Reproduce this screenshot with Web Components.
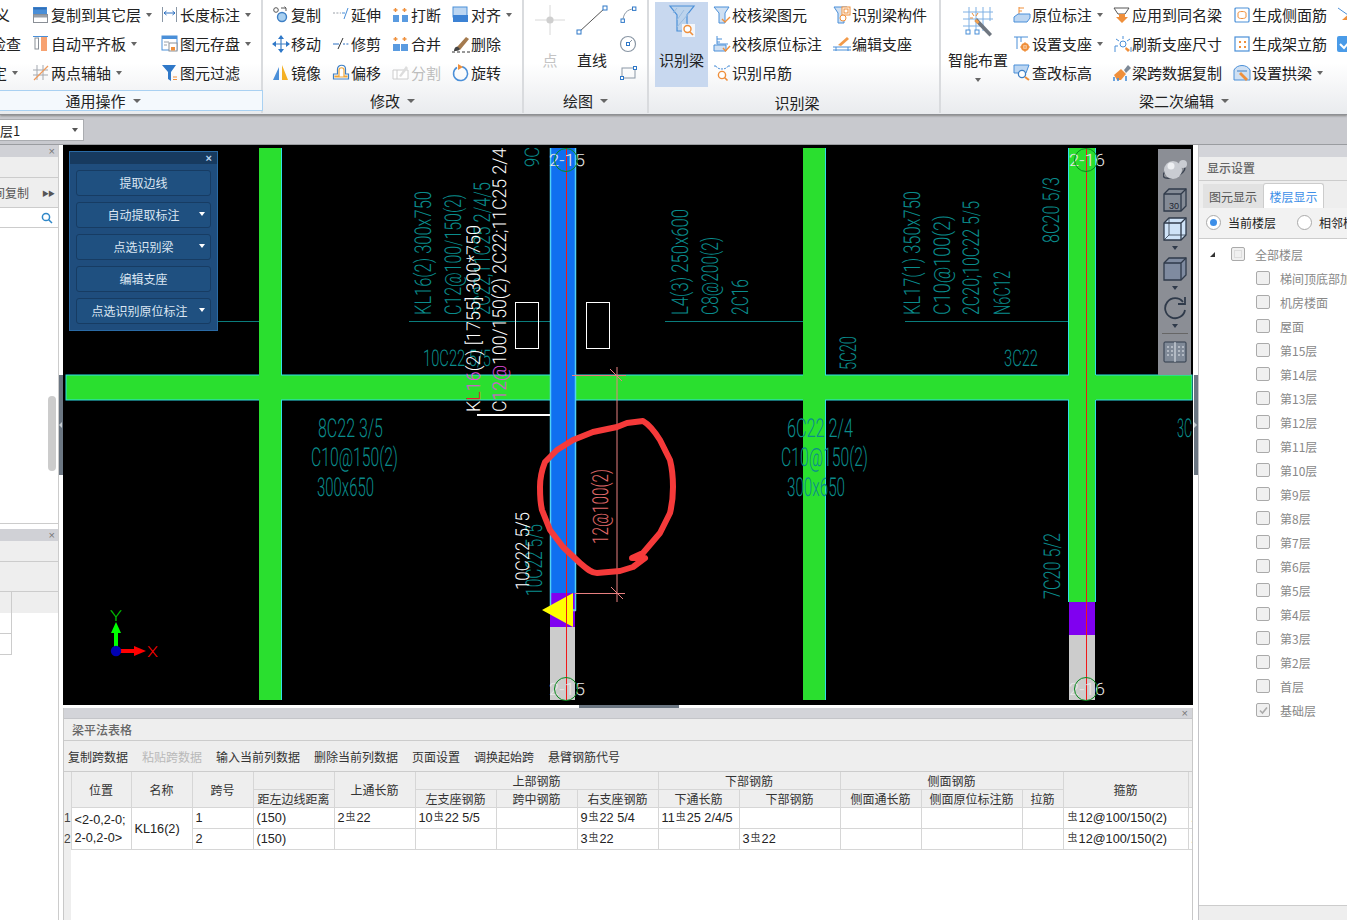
<!DOCTYPE html>
<html lang="zh">
<head>
<meta charset="utf-8">
<title>梁平法表格</title>
<style>
  html, body { margin: 0; height: 100%; background: #fff; overflow: hidden; }
  body { font: 12px "Noto Sans CJK SC", "Liberation Sans", sans-serif; }
  app-shell { width: 1347px; height: 920px; }
</style>
</head>
<body>
<app-shell>
  <app-ribbon slot="ribbon">
    <rb-group label="通用操作" caret hot cols="89px 129px 102px" width="320" style="margin-left:-57px">
      <rb-item label="定义" style="justify-self:end;margin-right:22px"></rb-item>
      <rb-item label="检查" style="justify-self:end;margin-right:11px"></rb-item>
      <rb-item label="设定" caret style="justify-self:end;margin-right:14px"></rb-item>
      <rb-item icon="copylayer" label="复制到其它层" caret></rb-item>
      <rb-item icon="autoalign" label="自动平齐板" caret></rb-item>
      <rb-item icon="twopoint" label="两点辅轴" caret></rb-item>
      <rb-item icon="lendim" label="长度标注" caret></rb-item>
      <rb-item icon="save" label="图元存盘" caret></rb-item>
      <rb-item icon="filter" label="图元过滤"></rb-item>
    </rb-group>
    <rb-group label="修改" caret cols="60px 60px 60px 60px" width="261" pad="9">
      <rb-item icon="copy" label="复制"></rb-item>
      <rb-item icon="move" label="移动"></rb-item>
      <rb-item icon="mirror" label="镜像"></rb-item>
      <rb-item icon="extend" label="延伸"></rb-item>
      <rb-item icon="trim" label="修剪"></rb-item>
      <rb-item icon="offset" label="偏移"></rb-item>
      <rb-item icon="break" label="打断"></rb-item>
      <rb-item icon="merge" label="合并"></rb-item>
      <rb-item icon="split" label="分割" disabled></rb-item>
      <rb-item icon="alignb" label="对齐" caret></rb-item>
      <rb-item icon="erase" label="删除"></rb-item>
      <rb-item icon="rotate" label="旋转"></rb-item>
    </rb-group>
    <rb-group label="绘图" caret cols="40px 44px 5px 24px" width="125" pad="6">
      <rb-large icon="point" w="30" h="30" label="点" disabled></rb-large>
      <rb-large icon="line" w="32" h="30" label="直线"></rb-large>
      <span style="grid-row:1 / span 3"></span>
      <rb-item icon="arc"></rb-item>
      <rb-item icon="circle"></rb-item>
      <rb-item icon="rect"></rb-item>
    </rb-group>
    <rb-group label="识别梁" cols="58px 120px 100px" width="292" pad="6" low>
      <rb-large icon="beam" w="26" h="32" label="识别梁" active></rb-large>
      <rb-item icon="checkbeam" label="校核梁图元"></rb-item>
      <rb-item icon="checkmark" label="校核原位标注"></rb-item>
      <rb-item icon="hanger" label="识别吊筋"></rb-item>
      <rb-item icon="beamparts" label="识别梁构件"></rb-item>
      <rb-item icon="editsupport" label="编辑支座"></rb-item>
    </rb-group>
    <rb-group label="梁二次编辑" caret cols="65px 100px 120px 103px 30px" width="486" pad="7" last>
      <rb-large icon="smart" w="32" h="32" label="智能布置" caret style="width:60px"></rb-large>
      <rb-item icon="inplace" label="原位标注" caret></rb-item>
      <rb-item icon="setsupport" label="设置支座" caret></rb-item>
      <rb-item icon="elevation" label="查改标高"></rb-item>
      <rb-item icon="applysame" label="应用到同名梁"></rb-item>
      <rb-item icon="refresh" label="刷新支座尺寸"></rb-item>
      <rb-item icon="brush" label="梁跨数据复制"></rb-item>
      <rb-item icon="siderebar" label="生成侧面筋"></rb-item>
      <rb-item icon="stand" label="生成架立筋"></rb-item>
      <rb-item icon="arch" label="设置拱梁" caret></rb-item>
      <rb-item icon="corner"></rb-item>
      <rb-item icon="tick"></rb-item>
    </rb-group>
  </app-ribbon>
  <floor-bar slot="floor">层1</floor-bar>
  <side-panel slot="left"></side-panel>
  <cad-canvas slot="canvas">
    <float-panel>
      <float-button>提取边线</float-button>
      <float-button caret>自动提取标注</float-button>
      <float-button caret>点选识别梁</float-button>
      <float-button>编辑支座</float-button>
      <float-button caret style="padding-right:8px">点选识别原位标注</float-button>
    </float-panel>
    <view-tools></view-tools>
  </cad-canvas>
  <plan-table slot="table"></plan-table>
  <display-settings slot="right"></display-settings>
</app-shell>

<script>
const CJK = '"Noto Sans CJK SC", "Liberation Sans", sans-serif';

// 小图标，默认 18x18
const ICONS = {
  copylayer: '<rect x="1" y="1" width="14" height="7" fill="#4a8fd8"/><rect x="1.5" y="1.5" width="13" height="2" fill="#2f6fb8"/><rect x="1.5" y="8.5" width="14" height="8" fill="#fff" stroke="#8a8f96"/><rect x="2" y="9" width="13" height="2.5" fill="#9aa0a8"/>',
  autoalign: '<path d="M1 1.5h15" stroke="#4a8fd8"/><rect x="3" y="3" width="3.5" height="11" fill="#fff" stroke="#8a8f96"/><rect x="9" y="2" width="6" height="14" fill="#f7a271"/>',
  twopoint: '<path d="M5 1v15M11 1v15M1 6h15M1 11h15" stroke="#a4a9b0"/><path d="M2 16 16 2" stroke="#ef9a5b" stroke-width="1.2"/>',
  lendim: '<path d="M1.5 1v15M15.5 1v15" stroke="#8a97a5"/><path d="M3 7h11M3 7l2.5-2M3 7l2.5 2M14 7l-2.5-2M14 7l-2.5 2" stroke="#2a6fc0" fill="none"/>',
  save: '<rect x="1" y="1" width="15" height="14" fill="#fff" stroke="#4a8fd8"/><rect x="1" y="1" width="15" height="3" fill="#4a8fd8"/><path d="M3 7h5M3 10h3" stroke="#9aa0a8"/><rect x="8" y="8" width="8" height="8" fill="#fff" stroke="#8a8f96"/><rect x="10" y="12" width="4" height="3.5" fill="#ef8f3b"/>',
  filter: '<path d="M1 1h14L10 8v9L7 15V8z" fill="#2f78c8"/><path d="M12 13h4M12 15.5h4" stroke="#ef8f3b"/>',
  copy: '<circle cx="4" cy="4" r="2.3" fill="#fff" stroke="#555"/><circle cx="10" cy="11" r="4.5" fill="#a9d0f0" stroke="#3e7fc4" stroke-width="1.4"/><path d="M9 2h5l-1.5-1.3M14 2v3" stroke="#555" fill="none"/>',
  move: '<path d="M9 1v16M1 9h16" stroke="#3e7fc4" stroke-width="1.2"/><path d="M9 0l3 4H6zM9 18l3-4H6zM0 9l4-3v6zM18 9l-4-3v6z" fill="#2f78c8"/>',
  mirror: '<path d="M7 3v13H1z" fill="#4a8fd8"/><path d="M10 1v15h6z" fill="#f4b024"/>',
  extend: '<path d="M1 7h8" stroke="#9aa0a8" stroke-dasharray="2 1.4"/><path d="M10 7h3" stroke="#4a8fd8"/><path d="M12 13 16 2" stroke="#4a8fd8"/>',
  trim: '<path d="M1 9h6" stroke="#2a6fc0"/><path d="M11 9h6" stroke="#2a6fc0" stroke-dasharray="2 1.4"/><path d="M6 14 11 3" stroke="#333"/>',
  break: '<path d="M1 9h6v7H1zM10 9h6v7h-6z" fill="#5a9be0"/><path d="M3.5 2v4M1.5 4h4M12.5 2v4M10.5 4h4" stroke="#ef8f3b" stroke-width="1.4"/>',
  merge: '<path d="M1 9h15v7H1z" fill="#5a9be0"/><path d="M8.5 9v7" stroke="#fff"/><path d="M3.5 2v4M1.5 4h4M12.5 2v4M10.5 4h4" stroke="#ef8f3b" stroke-width="1.4"/>',
  offset: '<path d="M1.5 15V10h4V5c0-5 8-5 8 0v5h3v5z" fill="#fff" stroke="#3e7fc4" stroke-width="1.2"/><path d="M3 13v-1h4V6c0-3 5-3 5 0v6h3v1z" fill="none" stroke="#f0a63a" stroke-width="1.2"/>',
  split: '<path d="M1 6h15v9H1zM5 6v9" fill="#fff" stroke="#ccc"/><path d="M7 12 14 2l2 2-7 9z" fill="#ddd"/>',
  alignb: '<rect x="1" y="1" width="14" height="10" fill="#bcd6f2" stroke="#4a8fd8"/><rect x="1" y="9" width="15" height="7" fill="#3c82d4"/>',
  erase: '<path d="M5 12 14 2l3 2-9 11z" fill="#a47a4e"/><path d="M2 16c0-3 2-5 4-4l2 2c-1 2-4 2-6 2z" fill="#444"/><path d="M0 17h18" stroke="#333" stroke-dasharray="3 2"/>',
  rotate: '<path d="M5 3.5a7 7 0 1 0 5-.8" fill="none" stroke="#4a8fd8" stroke-width="1.5"/><path d="M6 0l5 3-5 3z" fill="#ef8f3b"/>',
  point: '<path d="M15 0v30M0 15h30" stroke="#d8d8d8"/><circle cx="15" cy="15" r="3.6" fill="#cfcfcf"/>',
  line: '<path d="M3 27 29 3" stroke="#555"/><rect x="1" y="25" width="4" height="4" fill="#fff" stroke="#2f78c8"/><rect x="27" y="1" width="4" height="4" fill="#fff" stroke="#2f78c8"/>',
  arc: '<path d="M4 15C4 8 8 3 15 3" fill="none" stroke="#8a97a5"/><rect x="2" y="13" width="3.4" height="3.4" fill="#fff" stroke="#2f78c8"/><rect x="13.5" y="1" width="3.4" height="3.4" fill="#fff" stroke="#2f78c8"/>',
  circle: '<circle cx="9" cy="9" r="7.5" fill="none" stroke="#8a97a5" stroke-width="1.2"/><path d="M9 9l4-4" stroke="#8a97a5"/><rect x="7.5" y="7.5" width="3" height="3" fill="#fff" stroke="#2f78c8"/>',
  rect: '<rect x="3" y="4" width="13" height="10" fill="none" stroke="#8a97a5"/><rect x="1.5" y="12.5" width="3" height="3" fill="#fff" stroke="#2f78c8"/><rect x="14.5" y="2.5" width="3" height="3" fill="#fff" stroke="#2f78c8"/>',
  beam: '<path d="M1 1h24l-7 9v16H8V10z" fill="#bcd3ec" stroke="#4a8fd8" stroke-width="1.2"/><path d="M8 22 20 8M8 15 15 5M4 8 8 3M12 26 18 18" stroke="#9bbce0"/><rect x="13" y="19" width="13" height="13" fill="#f3f6fb"/><circle cx="18.5" cy="24" r="3.5" fill="#fff" stroke="#ef8f3b" stroke-width="1.4"/><path d="M21 27l3 3" stroke="#ef8f3b" stroke-width="1.6"/>',
  checkbeam: '<path d="M1 1h15l-4 6v10H6V7z" fill="#cfe0f3" stroke="#4a8fd8"/><path d="M9 13l3 3 5-5" fill="none" stroke="#ef8f3b" stroke-width="1.4"/>',
  checkmark: '<path d="M4 1v8h11" fill="none" stroke="#4a8fd8"/><path d="M4 4h5M4 7h3" stroke="#4a8fd8"/><path d="M1 10h12v6H1z" fill="#cfe0f3" stroke="#4a8fd8"/><path d="M10 13l2.5 3 4.5-5" fill="none" stroke="#ef8f3b" stroke-width="1.4"/>',
  hanger: '<path d="M1 2h2M15 2h2M3 2c1 4 11 4 12 0" fill="none" stroke="#4a8fd8" stroke-dasharray="2 1"/><circle cx="9" cy="11" r="3.6" fill="#fff" stroke="#ef8f3b" stroke-width="1.4"/><path d="M11.5 13.5l3 3" stroke="#ef8f3b" stroke-width="1.6"/>',
  beamparts: '<path d="M1 1h13l-3 6v10H5V7z" fill="#cfe0f3" stroke="#4a8fd8"/><rect x="9" y="1" width="8" height="8" fill="#fff" stroke="#ef8f3b"/><rect x="11" y="3" width="4" height="4" fill="none" stroke="#ef8f3b"/><circle cx="10" cy="12" r="3" fill="#fff" stroke="#ef8f3b"/>',
  editsupport: '<path d="M0 12h18M0 15h18" stroke="#4a8fd8"/><path d="M3 12v4M15 12v4" stroke="#4a8fd8"/><path d="M5 10 14 2l2 2-8 7z" fill="#f29a4a"/>',
  smart: '<path d="M7 2v24M14 2v24M21 2v24M28 2v14M1 7h30M1 14h30M1 21h18" stroke="#7fb0e4"/><path d="M15 13 30 29l-2.5 2.5L12.500 16z" fill="#6f7680"/><path d="M12.500 16l2-2 3 3-2 2z" fill="#f5a14d"/><path d="M10 8l2 3M16 8l-2 3M8 13h3" stroke="#ef8f3b"/><rect x="4" y="25" width="4" height="4" fill="#fff" stroke="#4a8fd8"/><rect x="13" y="25" width="4" height="4" fill="#fff" stroke="#4a8fd8"/>',
  inplace: '<path d="M6 1v8M6 2h5M6 5h3" stroke="#ef8f3b" fill="none"/><path d="M1 11 5 8h12v4l-3 4H1z" fill="#bcd6f2" stroke="#4a8fd8"/>',
  setsupport: '<path d="M1 2h14M4 2v12" stroke="#4a8fd8"/><path d="M8 2v5" stroke="#4a8fd8"/><circle cx="12" cy="12" r="3" fill="none" stroke="#ef8f3b" stroke-width="2"/><path d="M12 7v10M7 12h10" stroke="#ef8f3b"/>',
  elevation: '<path d="M1 1h15l-3 8H1z" fill="#bcd6f2" stroke="#4a8fd8"/><circle cx="9" cy="10" r="3.6" fill="#fff" stroke="#3e7fc4" stroke-width="1.3"/><path d="M12 13l4 3" stroke="#ef8f3b" stroke-width="2"/>',
  applysame: '<path d="M1 2h15l-4 6H5z" fill="#fff" stroke="#555"/><path d="M6 8h6v3h3l-6 6-6-6h3z" fill="#ef8f3b"/>',
  refresh: '<circle cx="10" cy="9" r="3" fill="#fff" stroke="#4a8fd8"/><path d="M10 1v3M3 4l3 2M17 4l-3 2M2 17v-6h3M18 17v-5" stroke="#4a8fd8" fill="none"/><path d="M13 12l4 3-2 2-3-3z" fill="#ef8f3b"/>',
  brush: '<path d="M1 11 8 5l5 5-5 6H4z" fill="#ef8f3b"/><path d="M11 6l4-5 3 3-5 5z" fill="#7c8896"/><path d="M1 17v-4M5 17v-3M13 17v-5" stroke="#4a8fd8" stroke-width="1.6"/>',
  siderebar: '<rect x="2" y="2" width="14" height="14" rx="1" fill="#fff" stroke="#4a8fd8" stroke-width="1.2"/><path d="M5 7c0-2 8-2 8 0M5 11c0 2 8 2 8 0M5 7v4M13 7v4" fill="none" stroke="#ef8f3b"/>',
  stand: '<rect x="2" y="2" width="14" height="14" fill="#fff" stroke="#4a8fd8" stroke-width="1.2"/><path d="M6 6h2v2H6zM11 6h2v2h-2zM6 11h2v2H6zM11 11h2v2h-2z" fill="#ef8f3b"/>',
  arch: '<path d="M1 6C4 0 14 0 17 6v10H1z" fill="#cfe0f3" stroke="#4a8fd8"/><path d="M4 7h10" stroke="#3e7fc4"/><path d="M8 8l7 7-2 2-7-7z" fill="#ef8f3b"/>',
  corner: '<path d="M2 2l10 7" stroke="#4a8fd8"/><path d="M6 14 16 5v9z" fill="#ef8f3b"/>',
  tick: '<rect x="1" y="1" width="16" height="16" rx="2" fill="#4a9be8"/><path d="M4 9l4 4 6-7" fill="none" stroke="#fff" stroke-width="2"/>'
};

// 界面外壳：用 grid 排好各区域
class AppShell extends HTMLElement {
  constructor() {
    super();
    this.attachShadow({ mode: 'open' });
    this.shadowRoot.innerHTML = `
      <style>
        :host { display: grid; grid-template-rows: 115px 30px 775px; overflow: hidden; font-family: ${CJK}; font-size: 12px; color: #222; }
        .main { display: grid; grid-template-columns: 59px 4px 1130px 5px 149px; background: #fff; min-height: 0; }
        .mid { display: grid; grid-template-rows: 560px 3px 212px; min-height: 0; }
        .gutter { display: flex; align-items: flex-start; justify-content: center; position: relative; }
        .handle { width: 4px; height: 100px; margin-top: 230px; background: #6b7682; display: flex; align-items: center; }
        .arrow-l { border: 3px solid transparent; border-right-color: #c4cad0; border-left: 0; }
        .arrow-r { border: 3px solid transparent; border-left-color: #c4cad0; border-right: 0; }
        .split { display: flex; justify-content: center; background: #fff; padding-left: 2px; }
        .split i { width: 100px; height: 4px; background: #6b7682; margin-top: -1px; display: block; }
      </style>
      <slot name="ribbon"></slot>
      <slot name="floor"></slot>
      <div class="main">
        <slot name="left"></slot>
        <div class="gutter"><div class="handle"><span class="arrow-l"></span></div></div>
        <div class="mid">
          <slot name="canvas"></slot>
          <div class="split"><i></i></div>
          <slot name="table"></slot>
        </div>
        <div class="gutter"><div class="handle"><span class="arrow-r"></span></div></div>
        <slot name="right"></slot>
      </div>`;
  }
}

class AppRibbon extends HTMLElement {
  constructor() {
    super();
    this.attachShadow({ mode: 'open' });
    this.shadowRoot.innerHTML = `
      <style>
        :host { display: flex; height: 115px; box-sizing: border-box; overflow: hidden; position: relative; z-index: 2;
          background: linear-gradient(#fff 0, #fff 55%, #e9ebee 100%); border-bottom: 1px solid #8e9094; box-shadow: 0 1px 2px #888; }
      </style>
      <slot></slot>`;
  }
}

class RbGroup extends HTMLElement {
  constructor() {
    super();
    this.attachShadow({ mode: 'open' });
  }
  connectedCallback() {
    const cols = this.getAttribute('cols');
    const caret = this.hasAttribute('caret') ? '<i class="caret"></i>' : '';
    this.shadowRoot.innerHTML = `
      <style>
        :host { display: flex; flex-direction: column; flex: none; box-sizing: border-box; height: 113px;
          width: ${this.getAttribute('width')}px; border-right: ${this.hasAttribute('last') ? '0' : '2px solid #d9dbde'}; }
        .body { display: grid; grid-auto-flow: column; grid-template-rows: repeat(3, 29px); grid-template-columns: ${cols};
          padding-left: ${this.getAttribute('pad') || 0}px; height: 90px; align-content: start; }
        .foot { height: 21px; display: flex; align-items: center; justify-content: center; gap: 7px; font-size: 15px; box-sizing: border-box;
          margin-top: ${this.hasAttribute('low') ? 2 : 0}px; padding-left: ${this.hasAttribute('low') ? 6 : 0}px; }
        .foot.hot { border: 1px solid #a9d1f2; background: #f4f9fd; margin-right: -2px; position: relative; }
        .caret { width: 0; height: 0; border: 4px solid transparent; border-top: 4px solid #666; border-bottom: 0; }
      </style>
      <div class="body"><slot></slot></div>
      <div class="foot ${this.hasAttribute('hot') ? 'hot' : ''}"><span>${this.getAttribute('label')}</span>${caret}</div>`;
  }
}

class RbItem extends HTMLElement {
  constructor() {
    super();
    this.attachShadow({ mode: 'open' });
  }
  connectedCallback() {
    const icon = this.getAttribute('icon');
    const label = this.getAttribute('label');
    this.shadowRoot.innerHTML = `
      <style>
        :host { display: flex; align-items: center; height: 29px; font-size: 15px; white-space: nowrap; line-height: 1;
          color: ${this.hasAttribute('disabled') ? '#bdbdbd' : '#222'}; }
        svg { flex: none; width: 18px; height: 18px; margin-right: 1px; overflow: visible; }
        .caret { width: 0; height: 0; border: 3.500px solid transparent; border-top: 4px solid #666; border-bottom: 0; margin-left: 5px; }
      </style>
      ${icon ? `<svg viewBox="0 0 18 18">${ICONS[icon]}</svg>` : ''}
      ${label ? `<span>${label}</span>` : ''}
      ${this.hasAttribute('caret') ? '<i class="caret"></i>' : ''}`;
  }
}

class RbLarge extends HTMLElement {
  constructor() {
    super();
    this.attachShadow({ mode: 'open' });
  }
  connectedCallback() {
    const w = this.getAttribute('w');
    const h = this.getAttribute('h');
    const active = this.hasAttribute('active');
    this.shadowRoot.innerHTML = `
      <style>
        :host { display: block; grid-row: 1 / span 3; height: 85px; margin-top: 2px; position: relative; font-size: 15px; text-align: center;
          white-space: nowrap; ${active ? 'background: #c8d8ef; width: 53px;' : ''}
          color: ${this.hasAttribute('disabled') ? '#c4c4c4' : '#222'}; }
        .wrap { display: flex; flex-direction: column; align-items: center; height: 100%; }
        .pic { height: 48px; display: flex; align-items: flex-start; padding-top: 3px; box-sizing: border-box; }
        svg { width: ${w}px; height: ${h}px; overflow: visible; }
        .txt { line-height: 20px; }
        .caret { width: 0; height: 0; border: 3.500px solid transparent; border-top: 4px solid #666; border-bottom: 0; margin-top: 8px; }
      </style>
      <div class="wrap">
        <div class="pic"><svg viewBox="0 0 ${w} ${h}">${ICONS[this.getAttribute('icon')]}</svg></div>
        <div class="txt">${this.getAttribute('label')}</div>
        ${this.hasAttribute('caret') ? '<i class="caret"></i>' : ''}
      </div>`;
  }
}

class FloorBar extends HTMLElement {
  constructor() {
    super();
    this.attachShadow({ mode: 'open' });
    this.shadowRoot.innerHTML = `
      <style>
        :host { display: flex; align-items: flex-start; height: 30px; box-sizing: border-box; background: #c8c9ce; border-bottom: 1px solid #9a9ca0; padding-top: 4px; }
        .combo { width: 84px; height: 22px; box-sizing: border-box; background: #fff; border: 1px solid #aaacb0; border-left: 0; display: flex; align-items: center; justify-content: space-between; padding-right: 5px; font-size: 13px; color: #222; }
        .combo i { width: 0; height: 0; border: 3px solid transparent; border-top: 4px solid #555; border-bottom: 0; }
      </style>
      <div class="combo"><span><slot></slot></span><i></i></div>`;
  }
}

class SidePanel extends HTMLElement {
  constructor() {
    super();
    this.attachShadow({ mode: 'open' });
    this.shadowRoot.innerHTML = `
      <style>
        :host { display: flex; flex-direction: column; position: relative; overflow: hidden; border-right: 1px solid #ccc; box-sizing: border-box; background: #fff; font-size: 12px; color: #555; }
        .title { height: 12px; background: #d0d1d6; display: flex; justify-content: flex-end; align-items: center; padding-right: 3px; font: 11px/12px "Liberation Sans", sans-serif; color: #777; }
        .row { background: #eee; border-bottom: 1px solid #ccc; box-sizing: border-box; display: flex; align-items: center; white-space: nowrap; }
        .a { height: 379px; border-bottom: 1px solid #ccc; box-sizing: border-box; }
        .b { margin-top: 5px; flex: 1; }
        .copy { justify-content: space-between; padding-right: 4px; }
        .copy b { font-weight: normal; font-size: 7px; color: #555; letter-spacing: -1px; }
        .search { background: #fff; height: 20px; justify-content: flex-end; padding-right: 5px; }
        .head { height: 21px; border: 0; }
        .cell { height: 21px; width: 12px; box-sizing: border-box; border: 1px solid #ccc; border-width: 0 1px 1px 0; }
        .head i { height: 100%; width: 12px; border-right: 1px solid #ccc; box-sizing: border-box; }
        .pill { position: absolute; left: 48px; top: 251px; width: 8px; height: 75px; border-radius: 4px; background: #ccc; }
      </style>
      <section class="a">
        <div class="title">×</div>
        <div class="row" style="height:21px"></div>
        <div class="row copy" style="height:30px"><span style="margin-left:-7px">间复制</span><b>▶▶</b></div>
        <div class="row search" style="height:20px"><svg width="12" height="12" viewBox="0 0 12 12"><circle cx="5" cy="5" r="3.600" fill="none" stroke="#2f87c8" stroke-width="1.500"/><path d="M7.500 7.500 11 11" stroke="#2f87c8" stroke-width="1.500"/></svg></div>
      </section>
      <section class="b">
        <div class="title">×</div>
        <div class="row" style="height:21px"></div>
        <div class="row" style="height:30px"></div>
        <div class="row head"><i></i></div>
        <div class="cell"></div>
        <div class="cell"></div>
      </section>
      <div class="pill"></div>`;
  }
}

class CadCanvas extends HTMLElement {
  constructor() {
    super();
    this.attachShadow({ mode: 'open' });
  }
  connectedCallback() {
    const teal = '#0a8c8c';
    // 竖排文字 [中心x, 底部y, 长度, 内容, 颜色, 字号]
    const vtexts = [
      [423, 315, 124, 'KL16(2) 300x750', teal, 23],
      [453, 315, 121, 'C12@100/150(2)', teal, 23],
      [482, 315, 133, '2C22;11C25 2/4/5', teal, 23],
      [532, 167, 20, '9C', teal, 20],
      [680, 315, 106, 'L4(3) 250x600', teal, 23],
      [710, 315, 78, 'C8@200(2)', teal, 23],
      [740, 315, 36, '2C16', teal, 23],
      [912, 315, 124, 'KL17(1) 350x750', teal, 23],
      [942, 315, 100, 'C10@100(2)', teal, 23],
      [971, 315, 114, '2C20;10C22 5/5', teal, 23],
      [1002, 315, 44, 'N6C12', teal, 23],
      [1051, 243, 66, '8C20 5/3', teal, 23],
      [848, 370, 34, '5C20', teal, 23],
      [1052, 599, 66, '7C20 5/2', teal, 23],
      [534, 596, 72, '10C22 5/5', teal, 23],
      [600, 544, 75, '12@100(2)', '#e06a6a', 22],
      [522, 590, 78, '10C22 5/5', '#fff', 19]
    ];
    // 横排文字 [x, 中心y, 长度, 内容, 颜色, 字号]
    const htexts = [
      [423, 358, 68, '10C22 5/5', teal, 23],
      [1004, 358, 34, '3C22', teal, 23],
      [318, 428, 65, '8C22 3/5', teal, 26],
      [311, 457, 87, 'C10@150(2)', teal, 26],
      [317, 487, 57, '300x650', teal, 26],
      [787, 428, 66, '6C22 2/4', teal, 26],
      [781, 457, 87, 'C10@150(2)', teal, 26],
      [787, 487, 58, '300x650', teal, 26],
      [1177, 428, 15, '3C', teal, 26]
    ];
    const vt = t => `<text transform="translate(${t[0] + t[5] * .36},${t[1]}) rotate(-90)" textLength="${t[2]}" lengthAdjust="spacingAndGlyphs" fill="${t[4]}" font-size="${t[5]}">${t[3]}</text>`;
    const ht = t => `<text x="${t[0]}" y="${t[1] + t[5] * .36}" textLength="${t[2]}" lengthAdjust="spacingAndGlyphs" fill="${t[4]}" font-size="${t[5]}">${t[3]}</text>`;
    const gridMark = (x, y, label) => `
      <text x="${x - 17}" y="${y + 6}" textLength="36" lengthAdjust="spacingAndGlyphs" fill="#e8e8e8" font-size="17">${label}</text>
      <circle cx="${x}" cy="${y}" r="11.500" fill="none" stroke="#0a8a1e"/>`;

    this.shadowRoot.innerHTML = `
      <style>
        :host { display: block; position: relative; background: #000; overflow: hidden; }
        svg.cad { display: block; width: 1130px; height: 560px; font-family: Roboto, "Liberation Sans", sans-serif; font-weight: 300; }
        svg text { text-rendering: geometricPrecision; }
      </style>
      <svg class="cad" viewBox="63 145 1130 560">
        <path d="M218 321.500h41M409 321.500h141M665 321.500h138M905 321.500h164" stroke="#0a7c7c"/>
        <rect x="66" y="375" width="1126" height="25" fill="#2adf2f" stroke="#2ee0e8"/>
        <rect x="259" y="148" width="22" height="552" fill="#2adf2f"/>
        <path d="M281.500 148v227M281.500 400v300" stroke="#2ee0e8"/>
        <rect x="803" y="148" width="22" height="552" fill="#2adf2f"/>
        <path d="M825.500 148v227M825.500 400v300" stroke="#2ee0e8"/>
        <!-- 右侧柱 -->
        <rect x="1069" y="148" width="27" height="454" fill="#2adf2f"/>
        <path d="M1068.500 148v227M1068.500 400v202M1095.500 148v227M1095.500 400v202" stroke="#2ee0e8"/>
        <rect x="1069" y="602" width="26" height="33" fill="#8000f0"/>
        <rect x="1069" y="635" width="26" height="65" fill="#ccc"/>
        <path d="M1086.500 148v552" stroke="#f01818"/>
        <!-- 选中的梁 -->
        <rect x="550" y="593" width="25" height="34" fill="#8000f0"/>
        <rect x="550" y="627" width="25" height="73" fill="#ccc"/>
        <rect x="550" y="148" width="25" height="445" fill="#0f6ff0"/>
        <path d="M550.500 148v462h25V148" fill="none" stroke="#4fd0f5" stroke-width="1.500"/>
        <path d="M550 610.500h26" stroke="#8fb0e8" stroke-width="1.500"/>
        <path d="M542 610 573 593v34z" fill="#ff0"/>
        <path d="M566.500 148v552" stroke="#f01818"/>
        ${htexts.map(ht).join('')}
        ${vtexts.map(vt).join('')}
        <!-- 白色选中标注 -->
        <text transform="translate(480,412) rotate(-90)" textLength="187" lengthAdjust="spacingAndGlyphs" fill="#fff" font-size="19">K<tspan fill="#e81b2b">L</tspan><tspan fill="#e04ee0">16</tspan>(2) [1755] 300*750</text>
        <text transform="translate(505.500,412) rotate(-90)" textLength="264" lengthAdjust="spacingAndGlyphs" fill="#fff" font-size="19">C<tspan fill="#e04ee0">12@</tspan>100/150(2) 2C22;11C25 2/4</text>
        <path d="M477 415h73" stroke="#fff" stroke-width="2"/>
        <rect x="515.500" y="302.500" width="23" height="46" fill="none" stroke="#fff"/>
        <rect x="586.500" y="302.500" width="23" height="46" fill="none" stroke="#fff"/>
        <!-- 粉色尺寸线 -->
        <path d="M617 367v235M572 375.500h54M575 593.500h50M610 369l12 12M611 587l12 12" stroke="#e88080" fill="none"/>
        ${gridMark(566, 160, '2-15')}
        ${gridMark(1086, 160, '2-16')}
        ${gridMark(566, 689, '2-15')}
        ${gridMark(1086, 689, '2-16')}
        <!-- 手绘红圈 -->
        <path d="M643 421 627 423 617 427 593 432 573 440 557 450 545 462C541 472 540 480 540 487S540 502 542 510L550 530 563 547 580 563C588 570 592 573 597 573L620 571 633 567 645 558 632 558 643 553 660 533 670 513C672 505 673 495 673 487S672 468 670 460L660 440C655 432 650 425 643 421Z" fill="none" stroke="#f53a3a" stroke-width="6" stroke-linejoin="round"/>
        <!-- 坐标轴 -->
        <path d="M116 651v-22" stroke="#0f0" stroke-width="4"/>
        <path d="M116 622l5 11h-10z" fill="#0f0"/>
        <text x="110" y="621" font-size="15" fill="#0c0" textLength="12" lengthAdjust="spacingAndGlyphs">Y</text>
        <path d="M116 651h20" stroke="#f00" stroke-width="4"/>
        <path d="M146 651l-12 5v-10z" fill="#f00"/>
        <text x="147" y="657" font-size="15" fill="#f00" textLength="11" lengthAdjust="spacingAndGlyphs">X</text>
        <circle cx="116" cy="651" r="5.200" fill="#0000b4"/>
      </svg>
      <slot></slot>`;
  }
}

class FloatPanel extends HTMLElement {
  constructor() {
    super();
    this.attachShadow({ mode: 'open' });
    this.shadowRoot.innerHTML = `
      <style>
        :host { position: absolute; left: 6px; top: 6px; width: 149px; height: 180px; box-sizing: border-box; background: #1f4d7d; border: 1px solid #2a6aa5; display: block; }
        .bar { height: 12px; background: #173a5f; display: flex; justify-content: flex-end; align-items: center; padding-right: 5px; color: #b9d4ee; font: bold 11px/12px "Liberation Sans", sans-serif; }
        .list { display: flex; flex-direction: column; gap: 6px; padding: 6px 6px; }
      </style>
      <div class="bar">×</div>
      <div class="list"><slot></slot></div>`;
  }
}

class FloatButton extends HTMLElement {
  constructor() {
    super();
    this.attachShadow({ mode: 'open' });
  }
  connectedCallback() {
    this.shadowRoot.innerHTML = `
      <style>
        :host { display: flex; align-items: center; justify-content: center; position: relative; height: 26px; box-sizing: border-box; padding-bottom: 1px; background: #1f5080; border: 1px solid #173c63; border-radius: 3px; color: #dbe6f2; font-size: 12px; }
        i { position: absolute; right: 5px; top: 9px; width: 0; height: 0; border: 3.500px solid transparent; border-top: 4px solid #fff; border-bottom: 0; }
      </style>
      <slot></slot>${this.hasAttribute('caret') ? '<i></i>' : ''}`;
  }
}

class ViewTools extends HTMLElement {
  constructor() {
    super();
    this.attachShadow({ mode: 'open' });
    const cube = (front, extra = '') => `<svg width="24" height="24" viewBox="0 0 24 24"><path d="M1 6 6 1h17v17l-5 5H1z" fill="${front}" stroke="#2f3a4a" stroke-width="1.300"/><path d="M1 6h17v17M18 6l5-5" fill="none" stroke="#2f3a4a" stroke-width="1.300"/>${extra}</svg>`;
    this.shadowRoot.innerHTML = `
      <style>
        :host { position: absolute; right: 2px; top: 4px; width: 33px; height: 226px; background: #8b8e95; display: flex; flex-direction: column; align-items: center; padding-top: 9px; box-sizing: border-box; }
        svg { display: block; flex: none; }
        .caret { width: 0; height: 0; border: 3px solid transparent; border-top: 4px solid #2f3a4a; border-bottom: 0; margin: 5px 0 7px; }
        .caret.c3 { margin: 4px 0 5px; }
        hr { width: 26px; border: 0; border-top: 1px solid #666; margin: 0 0 5px; }
      </style>
      <svg width="24" height="24" viewBox="0 0 24 24" style="margin-bottom:6px"><ellipse cx="11" cy="14" rx="11.500" ry="5" transform="rotate(-22 11 14)" fill="none" stroke="#3c4452" stroke-width="1.400"/><circle cx="10" cy="12" r="9" fill="#c9ccd2"/><circle cx="8" cy="8" r="3.500" fill="#eef0f3"/><circle cx="20" cy="6" r="4" fill="#c9ccd2"/></svg>
      <div style="margin-bottom:5px">${cube('#848b96', '<text x="6" y="21" font-size="9" fill="#1f2633" font-family="Liberation Sans">30</text>')}</div>
      ${cube('#cfe3f8', '<path d="M6 1v17H23M6 18l-5 5" fill="none" stroke="#2f3a4a" stroke-width=".8"/>')}
      <i class="caret"></i>
      ${cube('#7f8ba0')}
      <i class="caret" style="margin-bottom:6px"></i>
      <svg width="24" height="24" viewBox="0 0 24 24"><path d="M20 6A10 10 0 1 0 22 14" fill="none" stroke="#2f3a4a" stroke-width="1.800"/><path d="M22 1v7h-7" fill="none" stroke="#2f3a4a" stroke-width="1.800"/></svg>
      <i class="caret c3"></i>
      <hr>
      <svg width="24" height="24" viewBox="0 0 24 24"><rect x="1" y="3" width="22" height="20" rx="1" fill="#808a98" stroke="#2f3a4a"/><path d="M12 3v20M4 8h2M8 8h2M4 12h2M8 12h2M4 16h2M8 16h2M15 8h2M19 8h2M15 12h2M19 12h2M15 16h2M19 16h2" stroke="#e4e8ee"/></svg>`;
  }
}

class PlanTable extends HTMLElement {
  constructor() {
    super();
    this.attachShadow({ mode: 'open' });
    const bar = '<span class="bar">虫</span>';
    const widths = [7, 60, 61, 61, 81, 81, 81, 81, 81, 81, 101, 81, 101, 41, 125, 5];
    this.shadowRoot.innerHTML = `
      <style>
        :host { display: flex; flex-direction: column; overflow: hidden; box-sizing: border-box; border: 1px solid #c8c8c8; border-width: 0 1px 0 1px; background: #fff; font-size: 12px; color: #333; }
        .title, .head, .tools { box-sizing: border-box; flex: none; }
        .title { height: 11px; background: #d3d4d9; border-bottom: 1px solid #c4c5c9; display: flex; justify-content: flex-end; align-items: center; padding-right: 4px; font: 11px/10px "Liberation Sans", sans-serif; color: #777; }
        .head { height: 22px; display: flex; align-items: center; padding-left: 8px; background: #eee; color: #666; border-bottom: 1px solid #ccc; font-weight: 500; }
        .tools { height: 31px; display: flex; align-items: center; gap: 14px; padding-left: 4px; background: #eee; border-bottom: 1px solid #ccc; }
        .tools .off { color: #b9b9b9; }
        .grid { flex: 1; background: linear-gradient(90deg, #eee 7px, #fff 7px); min-height: 0; overflow: hidden; }
        table { border-collapse: collapse; table-layout: fixed; width: 1129px; font: 12px ${CJK}; }
        td, th { border: 1px solid #d6d6d6; border-top: 0; padding: 0; font-weight: normal; overflow: hidden; white-space: nowrap; }
        th { background: #eee; height: 16px; text-align: center; color: #333; }
        thead tr:last-child th { height: 17px; }
        td { height: 20px; font-family: "Liberation Sans", ${CJK}; font-size: 12.700px; padding-left: 3px; color: #222; }
        td.n { padding: 0; border: 0; text-align: center; background: #eee; font-size: 12px; color: #444; }
        td.pos { line-height: 18px; }
        th.n { border: 0; background: #eee; }
        .bar { display: inline-block; font-size: 10px; line-height: 10px; vertical-align: 2px; margin: 0 1px; color: #444; }
      </style>
      <div class="title">×</div>
      <div class="head">梁平法表格</div>
      <div class="tools">
        <span>复制跨数据</span><span class="off">粘贴跨数据</span><span>输入当前列数据</span><span>删除当前列数据</span><span>页面设置</span><span>调换起始跨</span><span>悬臂钢筋代号</span>
      </div>
      <div class="grid">
        <table>
          <colgroup>${widths.map(w => `<col style="width:${w}px">`).join('')}</colgroup>
          <thead>
            <tr>
              <th class="n" rowspan="2"></th>
              <th rowspan="2">位置</th><th rowspan="2">名称</th><th rowspan="2">跨号</th>
              <th></th><th rowspan="2">上通长筋</th>
              <th colspan="3">上部钢筋</th><th colspan="2">下部钢筋</th><th colspan="3">侧面钢筋</th>
              <th rowspan="2">箍筋</th><th rowspan="2"></th>
            </tr>
            <tr>
              <th>距左边线距离</th>
              <th>左支座钢筋</th><th>跨中钢筋</th><th>右支座钢筋</th>
              <th>下通长筋</th><th>下部钢筋</th>
              <th>侧面通长筋</th><th>侧面原位标注筋</th><th>拉筋</th>
            </tr>
          </thead>
          <tbody>
            <tr>
              <td class="n">1</td>
              <td class="pos" rowspan="2">&lt;2-0,2-0;<br>2-0,2-0&gt;</td>
              <td rowspan="2">KL16(2)</td>
              <td>1</td><td>(150)</td>
              <td>2${bar}22</td><td>10${bar}22 5/5</td><td></td><td>9${bar}22 5/4</td>
              <td>11${bar}25 2/4/5</td><td></td><td></td><td></td><td></td>
              <td>${bar}12@100/150(2)</td><td>2</td>
            </tr>
            <tr>
              <td class="n">2</td>
              <td>2</td><td>(150)</td>
              <td></td><td></td><td></td><td>3${bar}22</td>
              <td></td><td>3${bar}22</td><td></td><td></td><td></td>
              <td>${bar}12@100/150(2)</td><td>2</td>
            </tr>
          </tbody>
        </table>
      </div>`;
  }
}

class DisplaySettings extends HTMLElement {
  constructor() {
    super();
    this.attachShadow({ mode: 'open' });
    const floors = ['梯间顶底部加筋', '机房楼面', '屋面'];
    for (let i = 15; i >= 2; i--) floors.push('第' + i + '层');
    floors.push('首层', '基础层');
    const rows = floors.map(f => {
      const on = f === '基础层';
      return `<div class="rw"><span class="cb">${on ? '<svg width="9" height="9" viewBox="0 0 9 9"><path d="M1 4.500 3.500 7 8 1.500" fill="none" stroke="#aaa" stroke-width="1.600"/></svg>' : ''}</span><span>${f}</span></div>`;
    }).join('');
    this.shadowRoot.innerHTML = `
      <style>
        :host { display: flex; flex-direction: column; overflow: hidden; box-sizing: border-box; border-left: 1px solid #c4c4c8; background: #fff; font-size: 12px; color: #888; white-space: nowrap; }
        .title { height: 12px; flex: none; background: #d3d4d9; }
        .head { height: 24px; flex: none; display: flex; align-items: center; padding: 0 0 2px 8px; background: #eee; color: #666; border-bottom: 1px solid #ccc; box-sizing: border-box; font-weight: 500; }
        .tabs { height: 27px; flex: none; background: #eee; display: flex; align-items: flex-end; padding-left: 4px; }
        .tab { width: 60px; height: 24px; box-sizing: border-box; display: flex; align-items: center; justify-content: center; background: #e2e2e2; color: #555; }
        .tab.on { height: 25px; width: 61px; background: #fff; color: #3d8fe8; border: 1px solid #ccc; border-bottom: 0; border-radius: 3px 3px 0 0; }
        .radios { height: 31px; flex: none; background: #f2f2f2; border-bottom: 1px solid #ccc; box-sizing: border-box; display: flex; align-items: center; padding: 0 0 1px 7px; color: #222; }
        .radio { width: 13px; height: 13px; border: 1px solid #aaa; border-radius: 50%; background: #fff; display: flex; align-items: center; justify-content: center; margin-right: 7px; flex: none; box-sizing: content-box; }
        .radio.on::after { content: ""; width: 7px; height: 7px; border-radius: 50%; background: #3d8fe8; }
        .tree { flex: 1; padding-top: 3px; }
        .rw { height: 24px; display: flex; align-items: center; padding-left: 57px; gap: 10px; }
        .rw.all { padding-left: 32px; }
        .tri { width: 0; height: 0; border-bottom: 5px solid #333; border-left: 5px solid transparent; margin-left: -21px; margin-right: 6px; }
        .cb { width: 12px; height: 12px; flex: none; border: 1px solid #aaa; border-radius: 2px; background: #f0f0f0; display: flex; align-items: center; justify-content: center; }
        .all .cb { box-shadow: inset 0 0 0 2px #f0f0f0, inset 0 0 0 3px #ddd; }
        .foot { height: 14px; flex: none; background: #eee; border-top: 1px solid #ccc; }
      </style>
      <div class="title"></div>
      <div class="head">显示设置</div>
      <div class="tabs"><div class="tab">图元显示</div><div class="tab on">楼层显示</div></div>
      <div class="radios"><span class="radio on"></span><span>当前楼层</span><span class="radio" style="margin-left:21px"></span><span>相邻楼层</span></div>
      <div class="tree">
        <div class="rw all"><i class="tri"></i><span class="cb"></span><span>全部楼层</span></div>
        ${rows}
      </div>
      <div class="foot"></div>`;
  }
}

customElements.define('app-shell', AppShell);
customElements.define('app-ribbon', AppRibbon);
customElements.define('rb-group', RbGroup);
customElements.define('rb-item', RbItem);
customElements.define('rb-large', RbLarge);
customElements.define('floor-bar', FloorBar);
customElements.define('side-panel', SidePanel);
customElements.define('cad-canvas', CadCanvas);
customElements.define('float-panel', FloatPanel);
customElements.define('float-button', FloatButton);
customElements.define('view-tools', ViewTools);
customElements.define('plan-table', PlanTable);
customElements.define('display-settings', DisplaySettings);
</script>
</body>
</html>
